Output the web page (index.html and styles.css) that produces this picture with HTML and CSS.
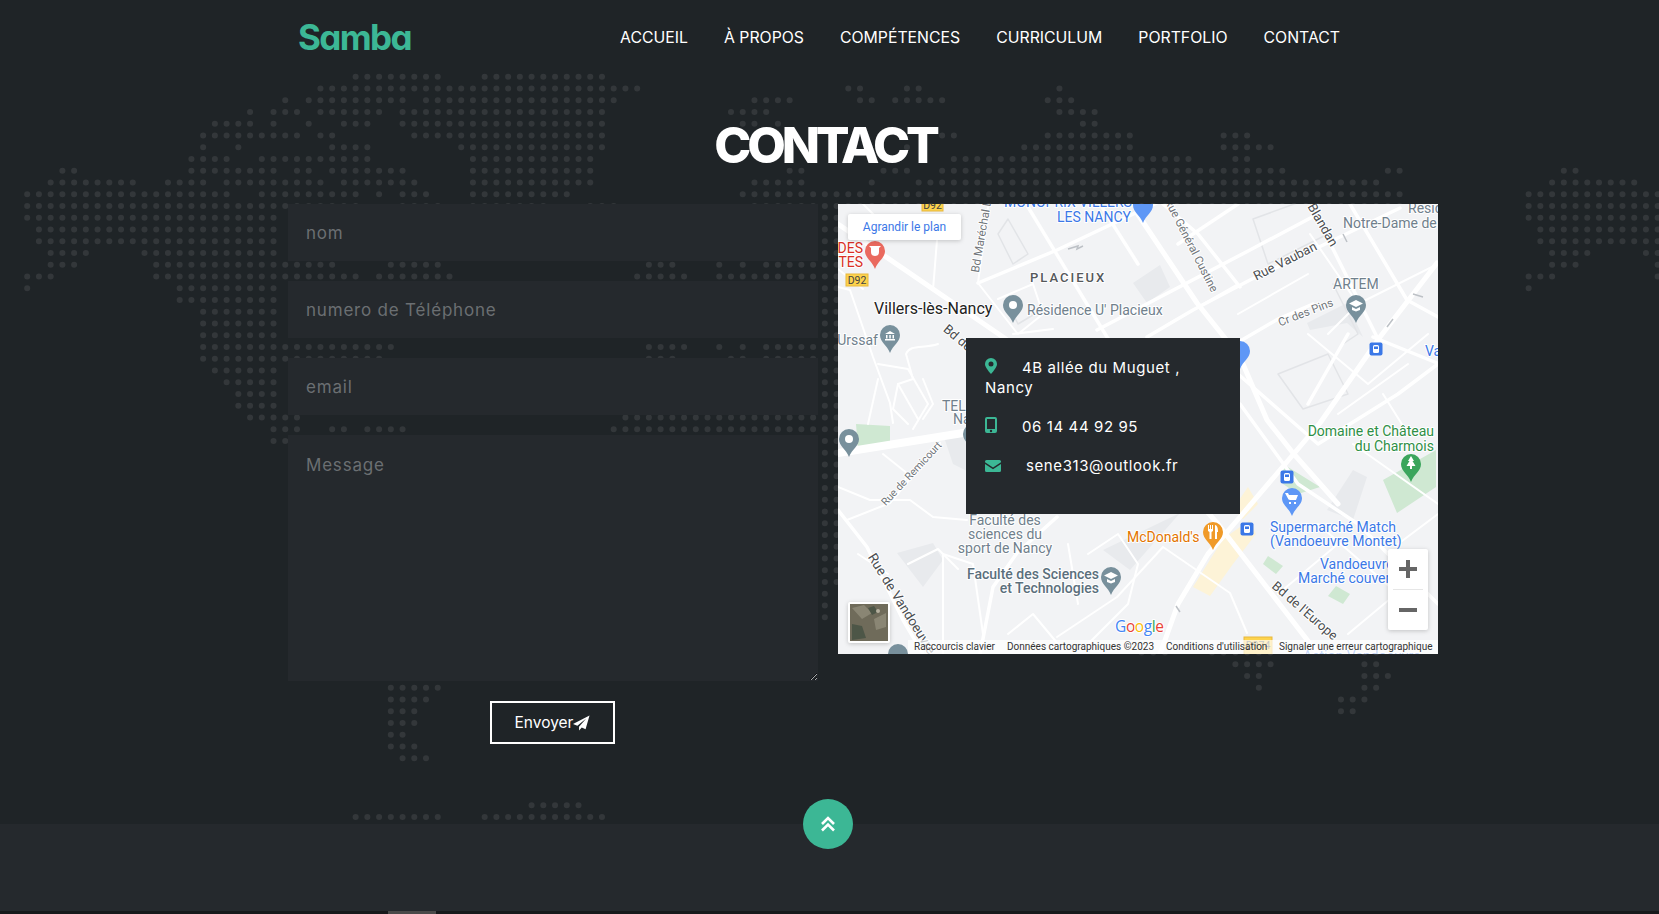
FILE: index.html
```html
<!DOCTYPE html>
<html lang="fr">
<head>
  <meta charset="UTF-8">
  <title>Samba - Contact</title>
  <link rel="stylesheet" href="styles.css">
</head>
<body>
  <!-- carte du monde en points, derriere tout le contenu. une unite = un point -->
  <svg class="world" width="1659" height="914" aria-hidden="true">
    <path transform="translate(27.2 76.7) scale(11.73 11.75)" d="
      M28 0H35.1M39 0H49.1
      M25 1H52.1M70 1H71.1M75 1H76.1M88 1H88.1
      M22 2H22.1M24 2H32.1M34 2H50.1M62 2H65.1M71 2H72.1M74 2H78.1M87 2H89.1
      M19 3H19.1M21 3H23.1M25 3H30.1M32 3H49.1M60 3H63.1M88 3H91.1
      M16 4H19.1M21 4H21.1M24 4H24.1M27 4H29.1M32 4H49.1M61 4H62.1M64 4H64.1M90 4H91.1
      M15 5H23.1M25 5H26.1M33 5H49.1M78 5H79.1M87 5H94.1M102 5H104.1
      M15 6H15.1M18 6H18.1M26 6H29.1M37 6H49.1M75 6H75.1M85 6H94.1M102 6H106.1
      M14 7H17.1M20 7H29.1M38 7H48.1M79 7H99.1M103 7H104.1
      M3 8H4.1M14 8H21.1M23 8H24.1M26 8H32.1M38 8H48.1M65 8H66.1M73 8H75.1M78 8H107.1M116 8H117.1M131 8H132.1
      M2 9H9.1M12 9H15.1M17 9H25.1M27 9H33.1M38 9H48.1M62 9H66.1M72 9H72.1M76 9H115.1M130 9H137.1
      M0 10H17.1M20 10H28.1M30 10H30.1M32 10H34.1M38 10H46.1M61 10H117.1M128 10H139.1
      M0 11H28.1M32 11H35.1M38 11H44.1M48 11H50.1M62 11H117.1M128 11H139.1
      M0 12H21.1M128 12H139.1
      M1 13H21.1M129 13H139.1
      M1 14H21.1M129 14H139.1
      M2 15H5.1M10 15H21.1M130 15H133.1M138 15H139.1
      M2 16H4.1M11 16H26.1M31 16H35.1M53 16H55.1M59 16H59.1M61 16H61.1M63 16H67.1M130 16H132.1M139 16H139.1
      M0 17H2.1M11 17H28.1M30 17H36.1M52 17H56.1M59 17H67.1M128 17H130.1M139 17H139.1
      M0 18H0.1M13 18H21.1M128 18H128.1
      M13 19H21.1
      M15 20H21.1
      M15 21H21.1
      M15 22H21.1
      M15 23H31.1M53 23H56.1M59 23H59.1M61 23H61.1M63 23H67.1
      M15 24H30.1M53 24H55.1M60 24H61.1M63 24H67.1
      M16 25H21.1
      M17 26H21.1
      M18 27H21.1
      M18 28H21.1
      M19 29H23.1M51 29H67.1
      M21 30H23.1M26 30H27.1M29 30H32.1M50 30H67.1
      M21 31H22.1
      M68 11V46.1M69 11V43.1
      M95 49H97.1M101 49H106.1M114 49H115.1
      M103 50H106.1M114 50H115.1
      M104 51H105.1M114 51H116.1
      M31 52H35.1M105 52H105.1M114 52H115.1
      M31 53H34.1M112 53H114.1
      M31 54H33.1M112 54H113.1
      M31 55H33.1
      M31 56H32.1
      M31 57H33.1
      M32 58H34.1
      M43 62H47.1
      M28 63H35.1M39 63H49.1
    "/>
  </svg>

  <div class="page">
    <header class="topbar">
      <a class="logo" href="#">Samba</a>
      <nav class="menu">
        <a href="#">ACCUEIL</a>
        <a href="#">À PROPOS</a>
        <a href="#">COMPÉTENCES</a>
        <a href="#">CURRICULUM</a>
        <a href="#">PORTFOLIO</a>
        <a href="#">CONTACT</a>
      </nav>
    </header>

    <section class="contact">
      <h1>CONTACT</h1>
      <div class="contact-row">
        <form class="contact-form">
          <input type="text" placeholder="nom">
          <input type="text" placeholder="numero de Téléphone">
          <input type="text" placeholder="email">
          <textarea placeholder="Message"></textarea>
          <button type="button">Envoyer<svg class="plane" viewBox="0 0 18 16"><path d="M17.500 0L0 9l4.600 2L14 3.200 6.400 12v4l2.900-3.300 4 1.800z"/></svg></button>
        </form>

        <div class="map-box">
          <svg class="map" width="600" height="450" viewBox="0 0 600 450">
            <defs>
              <path id="pin" d="M0-10a10 10 0 0 1 10 10c0 7-7 10-10 18c-3-8-10-11-10-18a10 10 0 0 1 10-10z"/>
              <g id="tram">
                <rect x="-6.500" y="-6.500" width="13" height="13" rx="2" fill="#3b78e7"/>
                <rect x="-3" y="-4" width="6" height="8" rx="1.500" fill="#fff"/>
                <rect x="-2" y="-2.500" width="4" height="2.500" fill="#3b78e7"/>
              </g>
              <path id="cap" d="M0-6l7 3.500-7 3.500-7-3.500zM-4 1l4 2 4-2v3l-4 1.500-4-1.500z"/>
            </defs>

            <!-- zones -->
            <path class="park" d="M18 220L52 222V238L20 245zM545 276L598 246V283L559 309zM445 260L482 283 460 290 445 280zM498 382L512 390 505 400 490 392z"/>
            <path class="park" d="M430 352L445 362 438 370 425 360z"/>
            <path class="mall" d="M355 383L385 335 412 316 418 330 395 360 372 392zM410 283L420 300 405 315 395 305z"/>
            <path class="built" d="M295 79L322 61 332 83 309 99zM489 306L515 266 529 273 515 316zM59 349L95 339 105 356 85 383zM265 346L342 309 292 366zM469 119L509 99 525 133 509 119 472 126zM105 230L130 225 135 270 115 260z"/>

            <!-- petites rues -->
            <path class="road-faint" d="M415 15L470-5 490 30 430 60zM440 170L490 150 510 190 465 205zM170 15L190 50 175 60 160 30zM495 80L520 130 505 140M205 105L180 120 170 100"/>

            <!-- routes -->
            <path class="road-main" d="M0 20L165 133 300 230 380 320 480 450"/>
            <path class="road-main" d="M299 9L359 99 402 153 429 216 455 249 500 300"/>
            <path class="road-main" d="M599 59L542 133 482 219 402 313 370 350 340 400 322 450"/>
            <path class="road-big" d="M0 249L125 229 240 222"/>
            <path class="road" d="M190 3L269 133 300 170"/>
            <path class="road" d="M262 0L300 60M400 0L340 40"/>
            <path class="road" d="M140 79L219 46 325-4"/>
            <path class="road" d="M259 126L412 46 480 10"/>
            <path class="road" d="M309 133L355 106 412 76 479 44 562 4"/>
            <path class="road" d="M512 0L569 96 600 113M535 133L599 159M492 39L539 133"/>
            <path class="road" d="M0 306L29 343 65 416 85 450"/>
            <path class="road" d="M142 450L155 383 179 349 219 313"/>
            <path class="road" d="M402 83L360 30 325 0M380 150L440 115 475 100"/>
            <path class="road" d="M402 200L460 280 520 320 600 400"/>
            <path class="road" d="M470 200L510 130M400 170L480 240 560 190 600 160"/>
            <path class="road-thin" d="M0 83L12 86 35 153 52 199 55 219"/>
            <path class="road-thin" d="M99 36L95 86M150 3L140 79 179 129"/>
            <path class="road-thin" d="M9 316L52 299 102 239"/>
            <path class="road-thin" d="M0 283L32 296 72 296 95 313 129 316"/>
            <path class="road-thin" d="M219 433L279 393 325 343 392 389 409 429"/>
            <path class="road-thin" d="M105 450V350L135 360 145 430M40 160L70 165 90 200 75 225M30 220L40 175M60 180L80 215"/>
            <path class="road-thin" d="M68 150C72 140 85 145 100 140M68 150L75 175 60 180 55 205 70 220M85 175L95 200 85 215"/>
            <path class="road-thin" d="M160 95L195 80 205 110 180 130M175 130L215 125"/>
            <path class="road-thin" d="M25 0L55 30M0 65L25 85M330 120L400 80M400 110L470 70M472 30L520 100 490 130"/>
            <path class="road-thin" d="M520 100L600 60M470 130L530 180 590 130M545 190L570 230M500 210L570 160"/>
            <path class="road-thin" d="M515 240L600 300M480 320L560 390M440 390L500 340M560 340L600 310M510 430L570 380"/>
            <path class="road-thin" d="M250 350L280 330 300 360 290 400 250 440M170 430L195 410 220 440M230 340L240 400"/>
            <path class="road-thin" d="M20 350L50 370M70 360L100 345 120 365M45 250L70 270 60 290"/>
            <path class="arrow" d="M230 45l10-3-1 3 6-3M505 30l4 8M575 90l10 3M555 115l-6 8M338 402l4 6"/>

            <!-- noms de rues -->
            <text class="street" transform="translate(449 61) rotate(-27)" text-anchor="middle">Rue Vauban</text>
            <text class="street" transform="translate(481 23) rotate(60)" text-anchor="middle">Blandan</text>
            <text class="street-small" transform="translate(469 112) rotate(-21)" text-anchor="middle">Cr des Pins</text>
            <text class="street-small" transform="translate(147 33) rotate(-80)" text-anchor="middle">Bd Maréchal L</text>
            <text class="street-small" transform="translate(350 43) rotate(63)" text-anchor="middle">Rue Général Custine</text>
            <text class="street" transform="translate(117 137) rotate(40)" text-anchor="middle">Bd de</text>
            <text class="street street-long" transform="translate(60 402) rotate(58)" text-anchor="middle">Rue de Vandoeuvre</text>
            <text class="street-small street-tiny" transform="translate(76 272) rotate(-47)" text-anchor="middle">Rue de Remicourt</text>
            <text class="street" transform="translate(464 410) rotate(41)" text-anchor="middle">Bd de l'Europe</text>

            <!-- routes departementales -->
            <rect class="badge" x="84" y="-6" width="21" height="13"/>
            <text class="badge-text" x="94.500" y="5" text-anchor="middle">D92</text>
            <rect class="badge" x="8" y="70" width="22" height="12"/>
            <text class="badge-text" x="19" y="80" text-anchor="middle">D92</text>
            <rect class="badge" x="406" y="433" width="28" height="18"/>
            <text class="badge-text" x="420" y="445" text-anchor="middle">D974</text>

            <!-- lieux -->
            <text class="place blue" x="230" y="3" text-anchor="middle">MONOPRIX VILLERS</text>
            <text class="place blue" x="293" y="18" text-anchor="end">LES NANCY</text>
            <use href="#pin" class="pin-blue" transform="translate(305 1)"/>
            <text class="place red" x="25" y="49" text-anchor="end">DES</text>
            <text class="place red" x="25" y="63" text-anchor="end">TES</text>
            <use href="#pin" class="pin-red" transform="translate(37 47)"/>
            <path fill="#fff" d="M31 42h12l-2 2v4a4 4 0 0 1-8 0v-4z"/>
            <text class="area" x="192" y="78">PLACIEUX</text>
            <text class="city" x="36" y="110">Villers-lès-Nancy</text>
            <use href="#pin" class="pin-grey" transform="translate(175 101)"/>
            <circle cx="175" cy="101" r="4" fill="#fff"/>
            <text class="place grey" x="189" y="111">Résidence U' Placieux</text>
            <text class="place grey" x="40" y="141" text-anchor="end">Urssaf</text>
            <use href="#pin" class="pin-grey" transform="translate(52 131)"/>
            <path fill="#fff" d="M47 130l5-3 5 3zM47 135h10v1.500H47zM48 131h1.500v3.500H48zM51.300 131h1.500v3.500h-1.500zM54.500 131H56v3.500h-1.500z"/>
            <text class="place grey" x="570" y="9">Résidence</text>
            <text class="place grey" x="505" y="24">Notre-Dame de Lourdes</text>
            <text class="place grey" x="495" y="85">ARTEM</text>
            <use href="#pin" class="pin-grey" transform="translate(518 101)"/>
            <use href="#cap" fill="#fff" transform="translate(518 102)"/>
            <use href="#tram" transform="translate(538 145)"/>
            <text class="place blue" x="587" y="152">Va</text>
            <use href="#pin" class="pin-blue" transform="translate(402 147)"/>
            <text class="place green" x="596" y="232" text-anchor="end">Domaine et Château</text>
            <text class="place green" x="596" y="247" text-anchor="end">du Charmois</text>
            <use href="#pin" class="pin-green" transform="translate(573 260)"/>
            <path fill="#fff" d="M573 252l3 5h-1.500l3 5h-3.500v3h-2v-3h-3.500l3-5H570z"/>
            <use href="#tram" transform="translate(449 273)"/>
            <use href="#tram" transform="translate(409 325)"/>
            <use href="#pin" class="pin-blue" transform="translate(454 294)"/>
            <path fill="#fff" d="M447 289h3l1 2h9l-2 5h-6l-1.500-.5zM451 298h2v2h-2zM456 298h2v2h-2z"/>
            <text class="place blue" x="432" y="328">Supermarché Match</text>
            <text class="place blue" x="432" y="342">(Vandoeuvre Montet)</text>
            <text class="place blue" x="482" y="365">Vandoeuvre</text>
            <text class="place blue" x="460" y="379">Marché couvert</text>
            <use href="#pin" class="pin-grey" transform="translate(11 235)"/>
            <circle cx="11" cy="235" r="4" fill="#fff"/>
            <use href="#pin" class="pin-grey" transform="translate(135 230)"/>
            <text class="place grey" x="104" y="207">TEL</text>
            <text class="place grey" x="115" y="220">Na</text>
            <text class="place grey" x="167" y="321" text-anchor="middle">Faculté des</text>
            <text class="place grey" x="167" y="335" text-anchor="middle">sciences du</text>
            <text class="place grey" x="167" y="349" text-anchor="middle">sport de Nancy</text>
            <text class="place slate" x="261" y="375" text-anchor="end">Faculté des Sciences</text>
            <text class="place slate" x="261" y="389" text-anchor="end">et Technologies</text>
            <use href="#pin" class="pin-grey" transform="translate(273 373)"/>
            <use href="#cap" fill="#fff" transform="translate(273 374)"/>
            <text class="place orange" x="289" y="338">McDonald's</text>
            <use href="#pin" class="pin-orange" transform="translate(375 328)"/>
            <path fill="#fff" d="M370 321h1v4h1v-4h1v4h1v-4h1v6l-1.500 1v7h-2v-7l-1.500-1zM377 321c2 0 3 3 3 7h-1v7h-2z"/>
            <use href="#pin" class="pin-grey" transform="translate(60 450)"/>
            <text class="place blue" x="465" y="457">Action Vandoeuvre</text>

            <!-- controles google -->
            <rect class="control" x="10" y="10" width="113" height="26" rx="2"/>
            <text class="link" x="66.500" y="27" text-anchor="middle">Agrandir le plan</text>
            <text class="google" x="277" y="428"><tspan fill="#4285f4">G</tspan><tspan fill="#ea4335">o</tspan><tspan fill="#fbbc05">o</tspan><tspan fill="#4285f4">g</tspan><tspan fill="#34a853">l</tspan><tspan fill="#ea4335">e</tspan></text>
            <rect class="control" x="10" y="398" width="42" height="41" rx="2"/>
            <rect x="12" y="400" width="38" height="37" fill="#6f6b5a"/>
            <path fill="#8a8674" d="M14 404l12-3 8 8-10 6zM36 415l12-6v14l-10 3z"/>
            <path fill="#4d5647" d="M14 420l10 2 4 12-14 2zM30 404l6-2 4 6-6 3z"/>
            <circle cx="40" cy="407" r="2" fill="#b5b09f"/>
            <rect class="control" x="550" y="345" width="40" height="81" rx="2"/>
            <path class="zoom-line" d="M555 385.500H585"/>
            <path class="zoom-sign" d="M561 365h18M570 356v18M561 406h18"/>
            <rect class="attrib" x="70" y="436" width="530" height="14"/>
            <text class="attrib-text" x="76" y="446">Raccourcis clavier</text>
            <text class="attrib-text" x="169" y="446">Données cartographiques ©2023</text>
            <text class="attrib-text" x="328" y="446">Conditions d'utilisation</text>
            <text class="attrib-text" x="441" y="446">Signaler une erreur cartographique</text>
          </svg>

          <div class="address">
            <p><svg class="ico ico-pin" viewBox="0 0 12 16"><path fill-rule="evenodd" d="M6 0a6 6 0 0 1 6 6c0 3-3 6.500-6 10C3 12.500 0 9 0 6a6 6 0 0 1 6-6zm0 3.500a2.500 2.500 0 1 0 0 5 2.500 2.500 0 0 0 0-5z"/></svg><span class="addr-text">4B allée du Muguet , Nancy</span></p>
            <p><svg class="ico ico-pin" viewBox="0 0 12 16"><path fill-rule="evenodd" d="M2 0h8a2 2 0 0 1 2 2v12a2 2 0 0 1-2 2H2a2 2 0 0 1-2-2V2a2 2 0 0 1 2-2zm0 2v10h8V2zm4 10.800a1.200 1.200 0 1 0 0 2.400 1.200 1.200 0 0 0 0-2.400z"/></svg><span class="addr-text">06 14 44 92 95</span></p>
            <p><svg class="ico ico-mail" viewBox="0 0 16 12"><path d="M1.500 0h13A1.500 1.500 0 0 1 16 1.500v.7L8 7.500 0 2.200v-.7A1.500 1.500 0 0 1 1.500 0zM0 4l8 5.200L16 4v6.500a1.500 1.500 0 0 1-1.500 1.500h-13A1.500 1.500 0 0 1 0 10.500z"/></svg><span class="addr-text">sene313@outlook.fr</span></p>
          </div>
        </div>
      </div>
    </section>

    <footer class="footer">
      <a class="to-top" href="#">
        <svg viewBox="0 0 16 16"><path d="M2 8l6-6 6 6M2 14.500l6-6 6 6"/></svg>
      </a>
    </footer>
    <div class="bottom-strip"><span class="strip-thumb"></span></div>
  </div>
</body>
</html>
```

FILE: styles.css
```css
* {
  box-sizing: border-box;
}

html, body {
  margin: 0;
  height: 914px;
  overflow: hidden;
}

body {
  background-color: #1f2427;
  color: #fff;
  font-family: Inter, "Open Sans", sans-serif;
  position: relative;
}

a {
  color: inherit;
  text-decoration: none;
}

.world {
  position: absolute;
  top: 0;
  left: 0;
}

.world path {
  fill: none;
  stroke: #33373a;
  stroke-width: 0.52;
  stroke-linecap: round;
  stroke-dasharray: 0 1;
}

.page {
  position: relative;
}

/* header */
.topbar {
  display: flex;
  justify-content: space-between;
  align-items: center;
  width: 1042px;
  height: 74px;
  margin-left: 298px;
}

.logo {
  color: #3cb795;
  font-size: 35px;
  font-weight: 700;
  font-feature-settings: "cv11";
  letter-spacing: -1.6px;
}

.menu {
  display: flex;
  gap: 36px;
  font-size: 15.8px;
  font-weight: 400;
}

/* contact */
.contact h1 {
  margin: 0;
  height: 130px;
  padding: 41px 9px 0 0;
  text-align: center;
  font-size: 50px;
  line-height: 60px;
  font-weight: 800;
  letter-spacing: -4.2px;
}

.contact-row {
  display: flex;
  gap: 20px;
  margin-left: 288px;
  padding-bottom: 80px;
}

.contact-form {
  display: flex;
  flex-direction: column;
  align-items: center;
  gap: 20px;
  width: 530px;
}

.contact-form input,
.contact-form textarea {
  width: 100%;
  height: 57px;
  padding: 0 18px;
  border: none;
  border-radius: 0;
  outline: none;
  background-color: #25292d;
  color: #fff;
  font-family: inherit;
  font-size: 17px;
  letter-spacing: 0.8px;
}

.contact-form textarea {
  height: 246px;
  padding: 20px 18px;
  color-scheme: dark;
  display: block;
}

.contact-form input::placeholder,
.contact-form textarea::placeholder {
  color: #6b6f72;
  opacity: 1;
}

.contact-form button {
  display: flex;
  align-items: center;
  justify-content: center;
  width: 125px;
  height: 43px;
  margin-right: 1px;
  background: transparent;
  border: 2px solid #fff;
  color: #fff;
  font-family: inherit;
  font-size: 15.5px;
  cursor: pointer;
}

.plane {
  width: 17px;
  height: 16px;
  fill: #fff;
}

/* map */
.map-box {
  position: relative;
  width: 600px;
  height: 450px;
  align-self: flex-start;
}

.map {
  display: block;
  background-color: #f2f3f5;
  font-family: Roboto, sans-serif;
}

.map .park { fill: #cfe8d2; }
.map .mall { fill: #fdf3d7; }
.map .built { fill: #e8eaed; }

.map .road-main, .map .road-big, .map .road, .map .road-thin, .map .road-faint {
  fill: none;
  stroke: #fff;
  stroke-linejoin: round;
  stroke-linecap: round;
}
.map .road-big { stroke-width: 8; }
.map .road-main { stroke-width: 5; }
.map .road { stroke-width: 3.5; }
.map .road-thin { stroke-width: 2; }
.map .road-faint { stroke: #e2e4e7; stroke-width: 1.5; }
.map .arrow { fill: none; stroke: #bdc1c6; stroke-width: 1.5; }

.map text {
  paint-order: stroke;
  stroke: #fff;
  stroke-width: 2px;
  stroke-linejoin: round;
}

.map .street { font-size: 13px; fill: #4a4d50; }
.map .street-long { font-size: 13.5px; }
.map .street-small { font-size: 11.5px; fill: #70757a; }
.map .street-tiny { font-size: 10.5px; }
.map .place { font-size: 14px; }
.map .blue { fill: #3b78e7; }
.map .red { fill: #d93025; }
.map .grey { fill: #70808c; }
.map .slate { fill: #5b6f7c; font-weight: 500; }
.map .green { fill: #2f8f46; }
.map .orange { fill: #e37400; }
.map .area { font-size: 13px; font-weight: 500; letter-spacing: 2px; fill: #55585b; }
.map .city { font-size: 16px; fill: #222; }

.map .pin-blue { fill: #5e97f6; }
.map .pin-red { fill: #ea6a5f; }
.map .pin-grey { fill: #78909c; }
.map .pin-green { fill: #3ba55c; }
.map .pin-orange { fill: #f09a28; }

.map .badge { fill: #fdd34d; stroke: #e8b83c; }
.map .badge-text { font-size: 10.5px; fill: #444; stroke: none; }

.map .control { fill: #fff; filter: drop-shadow(0 1px 2px rgba(0,0,0,0.2)); }
.map .link { font-size: 12px; fill: #3b78e7; stroke: none; }
.map .google { font-size: 15.5px; font-family: "Open Sans", sans-serif; letter-spacing: -0.4px; stroke-width: 2px; }
.map .zoom-line { stroke: #e6e6e6; stroke-width: 1; }
.map .zoom-sign { fill: none; stroke: #666; stroke-width: 4; }
.map .attrib { fill: rgba(255,255,255,0.7); }
.map .attrib-text { font-size: 10px; fill: #333; stroke: none; }

.address {
  position: absolute;
  top: 134px;
  left: 128px;
  width: 274px;
  height: 176px;
  padding: 20px 19px;
  background-color: #25292d;
  font-size: 15px;
  line-height: 19.5px;
  letter-spacing: 0.6px;
}

.address p {
  margin: 0 0 19.5px;
}

.ico {
  fill: #3cb795;
  vertical-align: -1px;
}

.ico-pin {
  width: 12px;
  height: 16px;
  margin-right: 25px;
}

.ico-mail {
  width: 16px;
  height: 12px;
  margin-right: 25px;
}

/* footer */
.footer {
  position: relative;
  height: 87px;
  background-color: #25292d;
}

.to-top {
  position: absolute;
  top: -25px;
  left: 803px;
  display: flex;
  align-items: center;
  justify-content: center;
  width: 50px;
  height: 50px;
  border-radius: 50%;
  background-color: #3cb795;
}

.to-top svg {
  width: 16px;
  height: 16px;
  fill: none;
  stroke: #fff;
  stroke-width: 2.6;
}

.bottom-strip {
  height: 3px;
  padding-left: 388px;
  background-color: #17191b;
}

.strip-thumb {
  display: block;
  width: 48px;
  height: 3px;
  background-color: #4a4a4a;
}
```
